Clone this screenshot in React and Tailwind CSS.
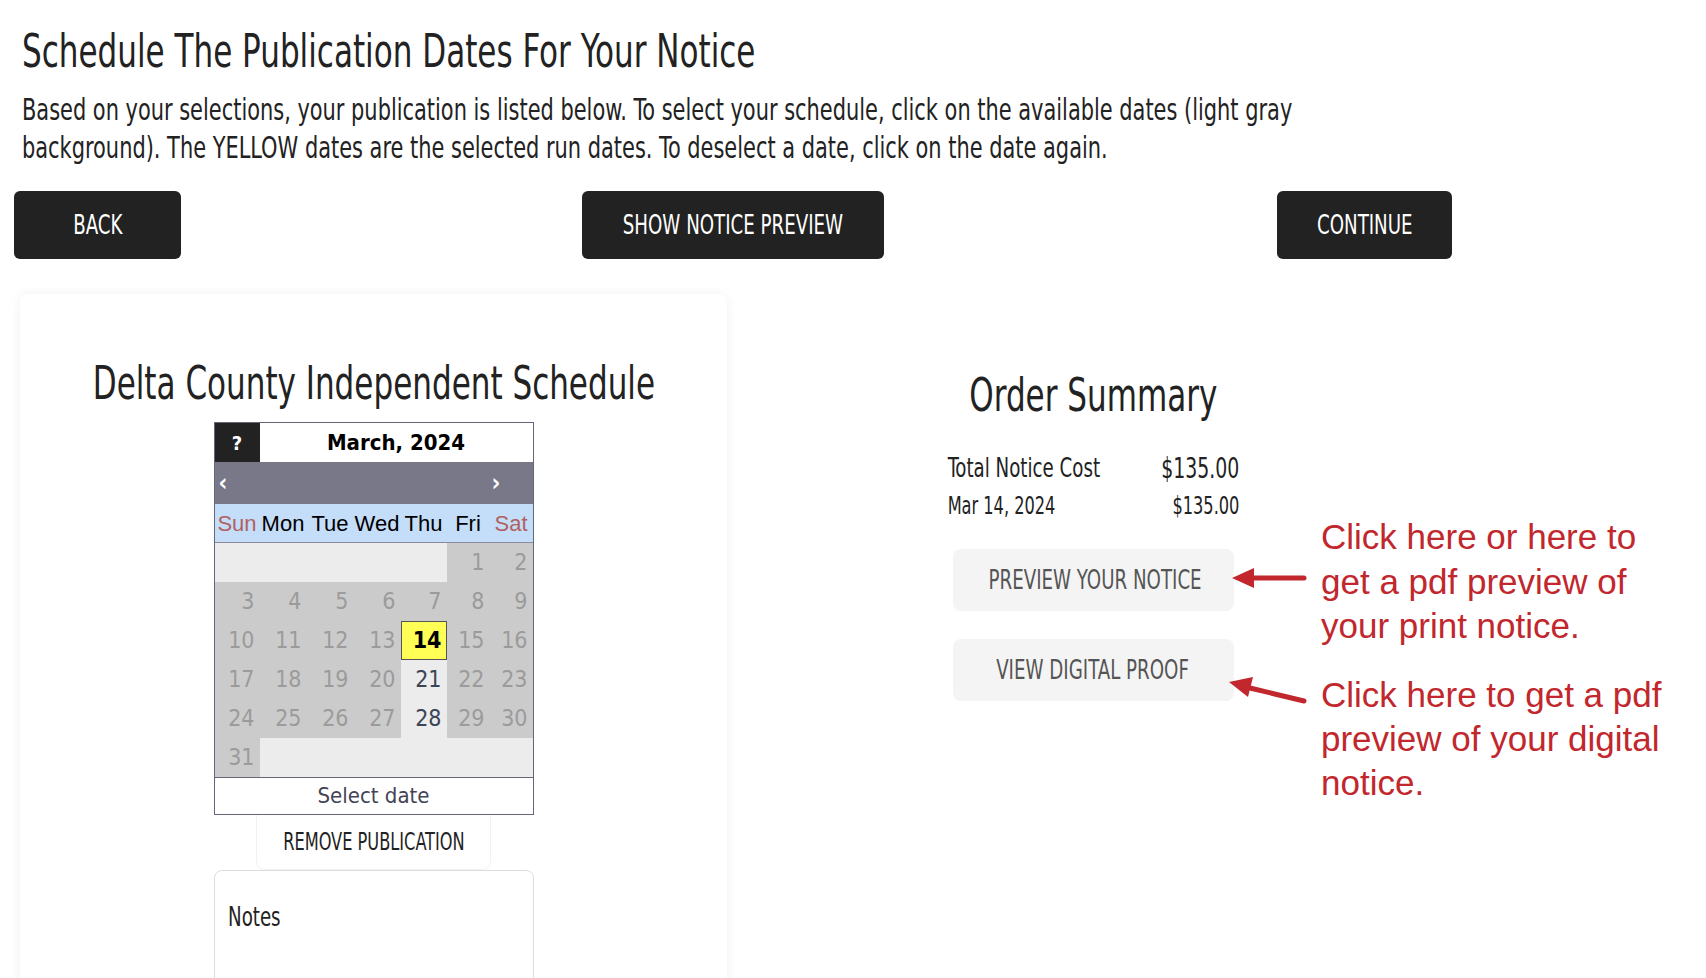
import React from 'react';

// no narrow sans installed: DejaVu Condensed squeezed to 75% stands in for the condensed display face
const cond = "font-['DejaVu_Sans_Condensed','DejaVu_Sans',sans-serif]";
const cal = "font-['DejaVu_Sans_Condensed','DejaVu_Sans',Verdana,sans-serif]";
const sq = 'inline-block scale-x-75';
const cols = 'grid grid-cols-[45px_47px_47px_47px_46px_43px_43px]';

const weeks = [
  [null, null, null, null, null, 1, 2],
  [3, 4, 5, 6, 7, 8, 9],
  [10, 11, 12, 13, 14, 15, 16],
  [17, 18, 19, 20, 21, 22, 23],
  [24, 25, 26, 27, 28, 29, 30],
  [31, null, null, null, null, null, null],
];
const available = [21, 28];
const selected = [14];

function DayCell({ day }) {
  if (day === null) return <div className="bg-[#ececec] h-[39px]" />;
  if (selected.includes(day))
    return (
      <div className="h-[39px] bg-[#ffff55] border border-[#555] text-black font-bold text-right pr-[4px] text-[23px] leading-[37px]">
        {day}
      </div>
    );
  if (available.includes(day))
    return <div className="h-[39px] bg-[#ececec] text-[#3b4557] text-right pr-[5px] text-[23px] leading-[39px]">{day}</div>;
  return <div className="h-[39px] bg-[#cbcbcb] text-[#9b9b9b] text-right pr-[5px] text-[23px] leading-[39px]">{day}</div>;
}

function Calendar() {
  const names = ['Sun', 'Mon', 'Tue', 'Wed', 'Thu', 'Fri', 'Sat'];
  return (
    <div className={`w-[320px] border border-[#66667a] bg-white ${cal}`}>
      <div className="flex h-[39px]">
        <div className="w-[45px] bg-[#222] text-white font-bold text-[20px] flex items-center justify-center">?</div>
        <div className="flex-1 text-black font-bold text-[22px] flex items-center justify-center">March, 2024</div>
      </div>
      <div className="h-[42px] bg-[#787889] flex items-center justify-between text-white font-bold text-[24px] pl-[4px] pr-[32px]">
        <span>&lsaquo;</span>
        <span>&rsaquo;</span>
      </div>
      <div className={`${cols} h-[39px] bg-[#c4ddf8] font-['Liberation_Sans',Arial,sans-serif] text-[22px] leading-[39px] text-center border-b border-[#8a8a9a]`}>
        {names.map((n, i) => (
          <div key={n} className={i === 0 || i === 6 ? 'text-[#b06262]' : 'text-black'}>{n}</div>
        ))}
      </div>
      <div className={cols}>
        {weeks.flat().map((d, i) => <DayCell key={i} day={d} />)}
      </div>
      <div className="h-[37px] border-t border-[#66667a] text-center text-[22px] leading-[36px] text-[#434355]">Select date</div>
    </div>
  );
}

export default function App() {
  return (
    <div className={`relative w-[1706px] h-[978px] overflow-hidden bg-white text-[#222] ${cond}`}>
      <div className="w-[1466px] px-[14px]">
        <h1 className="pl-2 pt-[26px] text-[46px] leading-[50px]">
          <span className={`${sq} origin-left whitespace-nowrap`}>Schedule The Publication Dates For Your Notice</span>
        </h1>
        <div className="pl-2 mt-[14px]">
          <p className="w-[1750px] origin-left scale-x-75 text-[31px] leading-[38px]">
            Based on your selections, your publication is listed below. To select your schedule, click on the available dates (light gray background). The YELLOW dates are the selected run dates. To deselect a date, click on the date again.
          </p>
        </div>

        <div className="mt-[25px] grid grid-cols-3">
          <button className="justify-self-start h-[68px] w-[167px] bg-[#222] text-white rounded-md text-[27px]"><span className={sq}>BACK</span></button>
          <button className="justify-self-center h-[68px] w-[302px] bg-[#222] text-white rounded-md text-[27px]"><span className={`${sq} whitespace-nowrap`}>SHOW NOTICE PREVIEW</span></button>
          <button className="justify-self-end h-[68px] w-[175px] bg-[#222] text-white rounded-md text-[27px]"><span className={sq}>CONTINUE</span></button>
        </div>

        <div className="mt-[35px] grid grid-cols-[707px_732px] ml-[6px]">
          <div className="rounded-lg shadow-[0_0_12px_rgba(0,0,0,0.06)] flex flex-col items-center pt-[64px] pb-10">
            <h2 className="text-[46px] leading-[50px] whitespace-nowrap scale-x-75">Delta County Independent Schedule</h2>
            <div className="mt-[14px]">
              <Calendar />
            </div>
            <div className="w-[235px] h-[55px] border border-t-0 border-[#f2f2f2] rounded-b-lg flex items-center justify-center text-[24px]">
              <span className={`${sq} whitespace-nowrap`}>REMOVE PUBLICATION</span>
            </div>
            <div className="w-[320px] h-[160px] border border-[#dddddd] rounded-lg px-[13px] pt-[28px] text-[27px] leading-[36px]">
              <span className={`${sq} origin-left`}>Notes</span>
            </div>
          </div>

          <div className="flex flex-col items-center pt-[76px]">
            <h2 className="text-[46px] leading-[50px] whitespace-nowrap scale-x-75">Order Summary</h2>
            <div className="mt-[30px] w-[389px] scale-x-75">
              <div className="flex justify-between items-center h-[37px]">
                <span className="text-[27px]">Total Notice Cost</span>
                <span className="text-[28px]">$135.00</span>
              </div>
              <div className="flex justify-between items-center h-[37px]">
                <span className="text-[24px]">Mar 14, 2024</span>
                <span className="text-[24px]">$135.00</span>
              </div>
            </div>
            <button className="mt-[25px] w-[281px] h-[62px] bg-[#f4f4f4] rounded-lg text-[#555] text-[27px]">
              <span className={`${sq} whitespace-nowrap`}>PREVIEW YOUR NOTICE</span>
            </button>
            <button className="mt-[28px] w-[281px] h-[62px] bg-[#f4f4f4] rounded-lg text-[#555] text-[27px]">
              <span className={`${sq} whitespace-nowrap`}>VIEW DIGITAL PROOF</span>
            </button>
          </div>
        </div>
      </div>

      {/* red annotations laid over the page */}
      <svg className="absolute left-[1220px] top-[560px]" width="100" height="160" viewBox="0 0 100 160">
        <line x1="84" y1="18" x2="30" y2="18" stroke="#c1272d" strokeWidth="5" strokeLinecap="round" />
        <polygon points="12,18 34,8 34,28" fill="#c1272d" />
        <line x1="84" y1="141" x2="30" y2="128" stroke="#c1272d" strokeWidth="5" strokeLinecap="round" />
        <polygon points="9,122 33,117 28,137" fill="#c1272d" />
      </svg>
      <div className="absolute left-[1321px] top-[515px] font-['Liberation_Sans',Arial,sans-serif] text-[35px] leading-[44.5px] text-[#c1272d]">
        Click here or here to<br />get a pdf preview of<br />your print notice.
      </div>
      <div className="absolute left-[1321px] top-[673px] font-['Liberation_Sans',Arial,sans-serif] text-[35px] leading-[44px] text-[#c1272d]">
        Click here to get a pdf<br />preview of your digital<br />notice.
      </div>
    </div>
  );
}
